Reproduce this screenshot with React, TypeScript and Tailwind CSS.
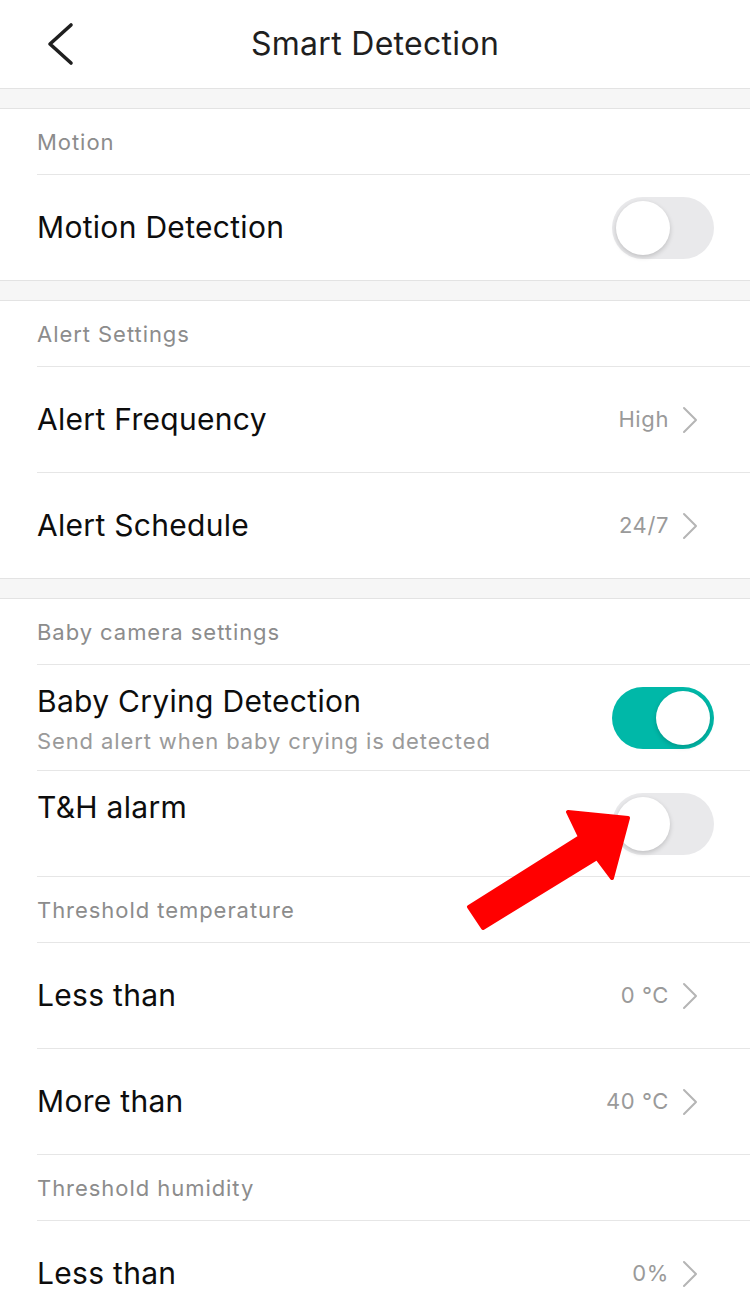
import { ReactNode } from 'react';

const font = { fontFamily: 'Inter, "Noto Sans", "Liberation Sans", sans-serif' };

function Band() {
  return <div className="h-[21px] bg-[#f6f6f6] border-y border-[#e3e3e3]" />;
}

function SectionTitle({ label }: { label: string }) {
  return (
    <div className="pl-[37px]">
      <div className="h-[66px] flex items-center pt-[2px] border-b border-[#e6e6e6] text-[22px] tracking-[0.95px] text-[#8c8c8c]">{label}</div>
    </div>
  );
}

function Chevron() {
  return (
    <svg width="16" height="28" viewBox="0 0 16 28" fill="none" className="ml-[13px]">
      <path d="M2 2 L14 14 L2 26" stroke="#b5b5b5" strokeWidth="2" strokeLinecap="round" strokeLinejoin="round" />
    </svg>
  );
}

function Toggle({ on }: { on?: boolean }) {
  return (
    <div
      className={`relative w-[102px] h-[62px] rounded-full ${on ? 'bg-[#00b8a8]' : 'bg-[#e9e9eb]'}`}
    >
      <div
        className={`absolute top-[4px] w-[54px] h-[54px] rounded-full bg-white shadow-[0_2px_5px_rgba(0,0,0,0.18)] ${on ? 'left-[44px]' : 'left-[4px]'}`}
      />
    </div>
  );
}

function Row({ title, value, last, children }: { title: string; value?: string; last?: boolean; children?: ReactNode }) {
  return (
    <div className="pl-[37px]">
      <div className={`${last ? 'h-[105px]' : 'h-[106px] border-b border-[#e6e6e6]'} flex items-center justify-between`}>
        <span className="text-[30px] tracking-[0.3px] text-[#0d0d0d]">{title}</span>
        {value !== undefined ? (
          <div className="flex items-center pr-[52px]">
            <span className="text-[22px] tracking-[0.6px] text-[#9a9a9a]">{value}</span>
            <Chevron />
          </div>
        ) : (
          <div className="pr-[36px]">{children}</div>
        )}
      </div>
    </div>
  );
}

function TallToggleRow({ title, sub, on }: { title: string; sub?: string; on?: boolean }) {
  return (
    <div className="pl-[37px]">
      <div className="h-[106px] border-b border-[#e6e6e6] flex items-center justify-between">
        <div className="self-start pt-[17px] flex flex-col">
          <span className="text-[30px] tracking-[0.3px] leading-[38px] text-[#0d0d0d]">{title}</span>
          {sub && <span className="text-[22px] tracking-[0.88px] leading-[30px] mt-[6px] text-[#9a9a9a]">{sub}</span>}
        </div>
        <div className="pr-[36px]">
          <Toggle on={on} />
        </div>
      </div>
    </div>
  );
}

export default function App() {
  return (
    <div className="relative w-[750px] h-[1294px] overflow-hidden bg-white" style={font}>
      {/* Header */}
      <div className="relative h-[88px] flex items-center justify-center">
        <svg width="30" height="44" viewBox="0 0 30 44" fill="none" className="absolute left-[45px] top-[22px]">
          <path d="M26 3 L5 22 L26 41" stroke="#1f1f1f" strokeWidth="3.6" strokeLinecap="round" strokeLinejoin="round" />
        </svg>
        <h1 className="text-[32px] text-[#1f1f1f] tracking-[0.3px]">Smart Detection</h1>
      </div>

      <Band />
      <SectionTitle label="Motion" />
      <Row title="Motion Detection" last>
        <Toggle />
      </Row>

      <Band />
      <SectionTitle label="Alert Settings" />
      <Row title="Alert Frequency" value="High" />
      <Row title="Alert Schedule" value="24/7" last />

      <Band />
      <SectionTitle label="Baby camera settings" />
      <TallToggleRow title="Baby Crying Detection" sub="Send alert when baby crying is detected" on />
      <TallToggleRow title="T&H alarm" />
      <SectionTitle label="Threshold temperature" />
      <Row title="Less than" value="0 °C" />
      <Row title="More than" value="40 °C" />
      <SectionTitle label="Threshold humidity" />
      <Row title="Less than" value="0%" />

      {/* Red annotation arrow */}
      <svg className="absolute left-0 top-0 pointer-events-none" width="750" height="1294" viewBox="0 0 750 1294">
        <polygon
          points="628,818 612,878 597,858 483,928 469,907 580,837 568,812"
          fill="#ff0000"
          stroke="#ff0000"
          strokeWidth="4"
          strokeLinejoin="round"
        />
      </svg>
    </div>
  );
}
